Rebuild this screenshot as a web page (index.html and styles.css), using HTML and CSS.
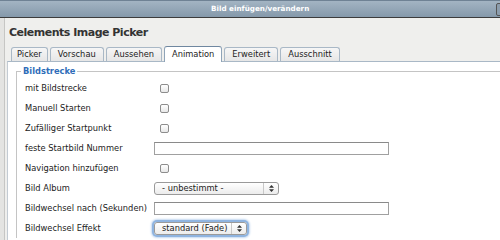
FILE: index.html
```html
<!DOCTYPE html>
<html lang="de">
<head>
    <meta charset="UTF-8">
    <title>Bild einfügen/verändern</title>
    <link rel="stylesheet" href="styles.css">
</head>
<body>

<div class="titlebar">
    <span class="title">Bild einfügen/verändern</span>
    <span class="close"></span>
</div>

<div class="dialog">
    <h2>Celements Image Picker</h2>

    <ul class="tabs">
        <li>Picker</li>
        <li>Vorschau</li>
        <li>Aussehen</li>
        <li class="active">Animation</li>
        <li>Erweitert</li>
        <li>Ausschnitt</li>
    </ul>

    <div class="panel">
        <fieldset>
            <legend>Bildstrecke</legend>

            <div class="row">
                <label for="slideshow">mit Bildstrecke</label>
                <span class="check"><input type="checkbox" id="slideshow"></span>
            </div>
            <div class="row">
                <label for="manualStart">Manuell Starten</label>
                <span class="check"><input type="checkbox" id="manualStart"></span>
            </div>
            <div class="row">
                <label for="randomStart">Zufälliger Startpunkt</label>
                <span class="check"><input type="checkbox" id="randomStart"></span>
            </div>
            <div class="row">
                <label for="startNumber">feste Startbild Nummer</label>
                <input type="text" id="startNumber" class="text">
            </div>
            <div class="row">
                <label for="navigation">Navigation hinzufügen</label>
                <span class="check"><input type="checkbox" id="navigation"></span>
            </div>
            <div class="row">
                <label for="album">Bild Album</label>
                <div class="select album" id="album">
                    <span class="value">- unbestimmt -</span>
                    <span class="arrows">
                        <svg width="5" height="7" viewBox="0 0 5 7"><path d="M2.5 0L5 2.8H0z M2.5 7L5 4.2H0z" fill="#333"/></svg>
                    </span>
                </div>
            </div>
            <div class="row">
                <label for="delay">Bildwechsel nach (Sekunden)</label>
                <input type="text" id="delay" class="text">
            </div>
            <div class="row">
                <label for="effect">Bildwechsel Effekt</label>
                <div class="select effect focus" id="effect">
                    <span class="value">standard (Fade)</span>
                    <span class="arrows">
                        <svg width="5" height="7" viewBox="0 0 5 7"><path d="M2.5 0L5 2.8H0z M2.5 7L5 4.2H0z" fill="#333"/></svg>
                    </span>
                </div>
            </div>
        </fieldset>
    </div>
</div>

</body>
</html>
```

FILE: styles.css
```css
html, body {
    margin: 0;
    padding: 0;
    width: 500px;
    height: 240px;
    overflow: hidden;
}
body {
    font-family: "DejaVu Sans", Verdana, sans-serif;
    font-size: 8.3px;
    color: #222;
    background-color: #e4e4e2;
}
.titlebar {
    height: 16px;
    background: linear-gradient(#a3b4c3, #8599ab);
    border-top: 1px solid #6f8294;
    border-bottom: 1px solid #3c3c3c;
    position: relative;
}
.title {
    display: block;
    padding-left: 211px;
    line-height: 16px;
    color: #fff;
    font-weight: bold;
    font-size: 7.2px;
}
.close {
    position: absolute;
    right: -6px;
    top: 2px;
    width: 8px;
    height: 11px;
    border: 1px solid #555;
    border-radius: 2px;
    background: #8c9dad;
}
.dialog {
    margin-left: 4px;
    height: 222px;
    border-left: 1px solid #c6c6c4;
    background-color: #efefed;
    padding-left: 2px;
}
h2 {
    margin: 0;
    padding: 8px 0 0 2px;
    height: 19px;
    font-size: 11px;
    letter-spacing: -0.5px;
    color: #333;
}
.tabs {
    list-style: none;
    margin: 0 0 0 4px;
    padding: 0;
    display: flex;
    align-items: flex-end;
    gap: 2px;
    height: 16px;
}
.tabs li {
    height: 13px;
    line-height: 13px;
    padding: 0 7px;
    border: 1px solid #a9b8c6;
    border-bottom: none;
    border-radius: 3px 3px 0 0;
    background: linear-gradient(#f6f6f6, #e6e6e6);
    color: #222;
}
.tabs li:first-child {
    padding: 0 5px;
}
.tabs li.active {
    height: 15px;
    line-height: 15px;
    background: #fff;
    border-color: #8fa4b8;
    border-top-color: #6f87a0;
    position: relative;
    top: 1px;
}
.panel {
    background: #fff;
    border-top: 1px solid #a9b8c6;
    border-left: 1px solid #c3cbd3;
    height: 180px;
    padding: 4px 0 0 8px;
}
fieldset {
    margin: 0;
    padding: 2px 0 0 8px;
    border: 1px solid #c4c4c4;
    border-right: none;
    border-bottom: none;
}
legend {
    padding: 0 2px;
    margin-left: -4px;
    font-weight: bold;
    color: #2e6db9;
    font-size: 8.3px;
}
.row {
    display: flex;
    align-items: center;
    height: 20px;
}
label {
    width: 129px;
    flex: none;
}
.check {
    width: 20px;
    display: flex;
    justify-content: center;
}
.check input {
    appearance: none;
    margin: 0;
    width: 9px;
    height: 9px;
    border: 1px solid #8d8d8d;
    border-radius: 2px;
    background: linear-gradient(#fff, #e8e8e8);
}
.text {
    box-sizing: border-box;
    margin: 0;
    width: 235px;
    height: 13px;
    padding: 0;
    border: 1px solid #a0a0a0;
    border-top-color: #8a8a8a;
    background: #fff;
}
.select {
    box-sizing: border-box;
    display: flex;
    align-items: center;
    height: 13px;
    border: 1px solid #9a9a9a;
    border-radius: 3px;
    background: linear-gradient(#fff, #ececec);
}
.select .value {
    flex: 1;
    padding-left: 7px;
}
.select .arrows {
    width: 14px;
    height: 100%;
    border-left: 1px solid #c8c8c8;
    display: flex;
    align-items: center;
    justify-content: center;
}
.album {
    width: 125px;
}
.effect {
    width: 93px;
}
.focus {
    box-shadow: 0 0 0 2px #8fb4e0, 0 0 2px 3px #c4d8f0;
}
```
